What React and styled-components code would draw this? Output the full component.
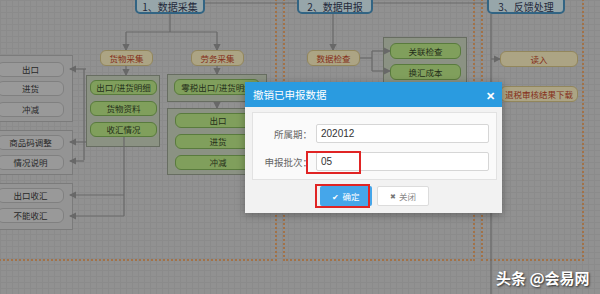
import React from 'react';
import styled, { createGlobalStyle, css } from 'styled-components';

const GlobalStyle = createGlobalStyle`
	html, body {
		margin: 0;
		padding: 0;
		overflow: hidden;
	}
	body {
		font-family: 'Noto Sans CJK SC', 'Noto Sans', sans-serif;
	}
`;

const groups = [
	{ x: -6, y: 55, w: 79, h: 67, tone: 'gray' },
	{ x: -6, y: 130, w: 79, h: 45, tone: 'gray' },
	{ x: -6, y: 183, w: 79, h: 47, tone: 'gray' },
	{ x: 86, y: 75, w: 74, h: 72, tone: 'green' },
	{ x: 167, y: 74, w: 100, h: 28, tone: 'green' },
	{ x: 167, y: 108, w: 100, h: 67, tone: 'green' },
	{ x: 383, y: 37, w: 84, h: 48, tone: 'green' },
];

const nodes = [
	{ x: 135, y: -4, w: 70, h: 18, kind: 'step', label: '1、数据采集' },
	{ x: 297, y: -4, w: 76, h: 18, kind: 'step', label: '2、数据申报' },
	{ x: 487, y: -4, w: 78, h: 18, kind: 'step', label: '3、反馈处理' },

	{ x: 100, y: 50, w: 53, h: 16, kind: 'tan', label: '货物采集' },
	{ x: 191, y: 50, w: 53, h: 16, kind: 'tan', label: '劳务采集' },
	{ x: 307, y: 50, w: 53, h: 16, kind: 'tan', label: '数据检查' },
	{ x: 500, y: 51, w: 78, h: 16, kind: 'tan', label: '读入' },
	{ x: 500, y: 86, w: 78, h: 16, kind: 'tan', label: '退税审核结果下载' },

	{ x: 90, y: 80, w: 67, h: 15, kind: 'green', label: '出口/进货明细' },
	{ x: 90, y: 101, w: 67, h: 15, kind: 'green', label: '货物资料' },
	{ x: 90, y: 122, w: 67, h: 15, kind: 'green', label: '收汇情况' },
	{ x: 174, y: 79, w: 86, h: 16, kind: 'green', label: '零税出口/进货明细' },
	{ x: 175, y: 113, w: 86, h: 15, kind: 'green', label: '出口' },
	{ x: 175, y: 134, w: 86, h: 15, kind: 'green', label: '进货' },
	{ x: 175, y: 155, w: 86, h: 15, kind: 'green', label: '冲减' },
	{ x: 390, y: 43, w: 71, h: 16, kind: 'green', label: '关联检查' },
	{ x: 390, y: 64, w: 71, h: 16, kind: 'green', label: '换汇成本' },

	{ x: -3, y: 62, w: 67, h: 15, kind: 'gray', label: '出口' },
	{ x: -3, y: 81, w: 67, h: 15, kind: 'gray', label: '进货' },
	{ x: -3, y: 102, w: 67, h: 15, kind: 'gray', label: '冲减' },
	{ x: -3, y: 135, w: 67, h: 15, kind: 'gray', label: '商品码调整' },
	{ x: -3, y: 155, w: 67, h: 15, kind: 'gray', label: '情况说明' },
	{ x: -3, y: 188, w: 67, h: 15, kind: 'gray', label: '出口收汇' },
	{ x: -3, y: 208, w: 67, h: 15, kind: 'gray', label: '不能收汇' },
];

// connectors: [x1, y1, x2, y2, arrow]
const links = [
	[170, 14, 170, 32],
	[126, 32, 217, 32],
	[126, 32, 126, 50, 1],
	[217, 32, 217, 50, 1],
	[126, 66, 126, 75, 1],
	[217, 66, 217, 74, 1],
	[217, 102, 217, 108, 1],
	[205, 3, 297, 3],
	[373, 3, 487, 3],
	[333, 14, 333, 50, 1],
	[360, 58, 372, 58],
	[372, 51, 372, 71],
	[372, 51, 390, 51, 1],
	[372, 71, 390, 71, 1],
	[491, 14, 491, 294],
	[491, 59, 500, 59, 1],
	[491, 94, 500, 94, 1],
	[86, 69, 70, 69, 1],
	[84, 69, 84, 160],
	[86, 142, 70, 142, 1],
	[84, 161, 70, 161, 1],
	[124, 137, 124, 216],
	[124, 195, 70, 195, 1],
	[124, 216, 70, 216, 1],
];

const lanes = [
	{ x: -10, w: 287 },
	{ x: 283, w: 192 },
	{ x: 481, w: 103 },
];

export default function App() {
	return (
		<>
			<GlobalStyle />
			<Stage>
				<Canvas>
					{lanes.map((l, i) => (
						<Lane key={i} $x={l.x} $w={l.w} />
					))}
					{groups.map((g, i) => (
						<Group key={i} $x={g.x} $y={g.y} $w={g.w} $h={g.h} $tone={g.tone} />
					))}
					<Wires width="600" height="294">
						<defs>
							<marker id="tip" markerWidth="6" markerHeight="6" refX="5" refY="3" orient="auto">
								<path d="M0,0 L6,3 L0,6 z" fill="#959595" />
							</marker>
						</defs>
						{links.map(([x1, y1, x2, y2, a], i) => (
							<line
								key={i}
								x1={x1}
								y1={y1}
								x2={x2}
								y2={y2}
								stroke="#959595"
								strokeWidth="1.2"
								markerEnd={a ? 'url(#tip)' : undefined}
							/>
						))}
					</Wires>
					{nodes.map((n, i) => (
						<Node key={i} $x={n.x} $y={n.y} $w={n.w} $h={n.h} $kind={n.kind}>
							<NodeText>{n.label}</NodeText>
						</Node>
					))}
				</Canvas>
				<Mask />
				<Dialog>
					<TitleBar>
						<span>撤销已申报数据</span>
						<Close>✕</Close>
					</TitleBar>
					<Body>
						<Form>
							<Row>
								<Label>所属期：</Label>
								<Input>202012</Input>
							</Row>
							<Row>
								<Label>申报批次：</Label>
								<Input>05</Input>
							</Row>
						</Form>
						<Actions>
							<Button $primary>
								<Tick>✔</Tick>确定
							</Button>
							<Button>
								<Cross>✖</Cross>关闭
							</Button>
						</Actions>
					</Body>
					<Marker $x={61} $y={69} $w={55} $h={23} />
					<Marker $x={70} $y={102} $w={55} $h={24} />
				</Dialog>
				<Watermark>头条 @会易网</Watermark>
			</Stage>
		</>
	);
}

const Stage = styled.div`
	position: relative;
	width: 600px;
	height: 294px;
	overflow: hidden;
`;

const Canvas = styled.div`
	position: absolute;
	inset: 0;
	background-color: #d0d0d0;
	background-image: linear-gradient(#c8c8c8 1px, transparent 1px),
		linear-gradient(90deg, #c8c8c8 1px, transparent 1px);
	background-size: 6px 6px;
`;

const Lane = styled.div.attrs(p => ({ style: { left: p.$x, width: p.$w } }))`
	position: absolute;
	top: -10px;
	height: 271px;
	border: 2px dotted #e8a468;
	box-sizing: border-box;
`;

const Group = styled.div.attrs(p => ({
	style: { left: p.$x, top: p.$y, width: p.$w, height: p.$h },
}))`
	position: absolute;
	box-sizing: border-box;
	border: 1px solid ${p => (p.$tone === 'green' ? '#949c8c' : '#b0b0b0')};
	background: ${p => (p.$tone === 'green' ? '#c8d2bc' : '#d4d4d4')};
`;

const Wires = styled.svg`
	position: absolute;
	left: 0;
	top: 0;
`;

const kinds = {
	step: css`
		background: #d8eef4;
		border: 2px solid #4890bc;
		border-radius: 5px;
		color: #333a55;
		font-size: 10px;
		padding-top: 3px;
	`,
	tan: css`
		background: #f6ebbe;
		border: 1px solid #d2c084;
		border-radius: 6px;
		color: #c04428;
		font-size: 8.5px;
	`,
	green: css`
		background: #b8e484;
		border: 1px solid #80b058;
		border-radius: 6px;
		color: #354528;
		font-size: 8.5px;
	`,
	gray: css`
		background: #dcdcdc;
		border: 1px solid #b8b8b8;
		border-radius: 6px;
		color: #3a3a3a;
		font-size: 8.5px;
	`,
};

const Node = styled.div.attrs(p => ({
	style: { left: p.$x, top: p.$y, width: p.$w, height: p.$h },
}))`
	position: absolute;
	box-sizing: border-box;
	display: flex;
	align-items: center;
	justify-content: center;
	white-space: nowrap;
	${p => kinds[p.$kind]}
`;

const NodeText = styled.span`
	line-height: 1;
`;

const Mask = styled.div`
	position: absolute;
	inset: 0;
	background: rgba(0, 0, 0, 0.3);
`;

const Dialog = styled.div`
	position: absolute;
	left: 245px;
	top: 82px;
	width: 257px;
	height: 131px;
	background: #f2f2f2;
	box-shadow: 0 2px 8px rgba(0, 0, 0, 0.3);
	display: flex;
	flex-direction: column;
`;

const TitleBar = styled.div`
	height: 25px;
	background: #2a9be0;
	color: #fff;
	font-size: 10.5px;
	display: flex;
	align-items: center;
	justify-content: space-between;
	padding: 0 7px 0 8px;
`;

const Close = styled.span`
	font-size: 11px;
	font-weight: bold;
`;

const Body = styled.div`
	flex: 1;
	padding: 5px 5px 7px 7px;
	display: flex;
	flex-direction: column;
`;

const Form = styled.div`
	background: #fafafa;
	border: 1px solid #e2e2e2;
	height: 68px;
	box-sizing: border-box;
	padding: 11px 7px 0 0;
	display: flex;
	flex-direction: column;
	gap: 9px;
`;

const Row = styled.div`
	display: flex;
	align-items: center;
	gap: 4px;
`;

const Label = styled.div`
	width: 59px;
	text-align: right;
	font-size: 9.5px;
	color: #666;
`;

const Input = styled.div`
	flex: 1;
	height: 19px;
	box-sizing: border-box;
	border: 1px solid #d6d6d6;
	border-radius: 2px;
	background: #fff;
	font-family: 'Liberation Sans', sans-serif;
	font-size: 10px;
	color: #333;
	display: flex;
	align-items: center;
	padding-left: 4px;
`;

const Actions = styled.div`
	margin-top: 6px;
	display: flex;
	justify-content: center;
	gap: 5px;
`;

const Button = styled.div`
	width: 52px;
	height: 20px;
	box-sizing: border-box;
	border-radius: 2px;
	display: flex;
	align-items: center;
	justify-content: center;
	font-size: 8.5px;
	gap: 3px;
	${p =>
		p.$primary
			? css`
					background: #45a6ea;
					color: #fff;
			  `
			: css`
					background: #fff;
					border: 1px solid #dcdcdc;
					color: #888;
			  `}
`;

const Tick = styled.span`
	font-size: 8px;
`;

const Cross = styled.span`
	font-size: 7px;
	color: #777;
`;

const Marker = styled.div.attrs(p => ({
	style: { left: p.$x, top: p.$y, width: p.$w, height: p.$h },
}))`
	position: absolute;
	box-sizing: border-box;
	border: 2px solid #e02424;
`;

const Watermark = styled.div`
	position: absolute;
	left: 496px;
	top: 267px;
	font-size: 15px;
	font-weight: bold;
	color: #fff;
	text-shadow: 1px 1px 2px rgba(0, 0, 0, 0.7);
	white-space: nowrap;
`;
